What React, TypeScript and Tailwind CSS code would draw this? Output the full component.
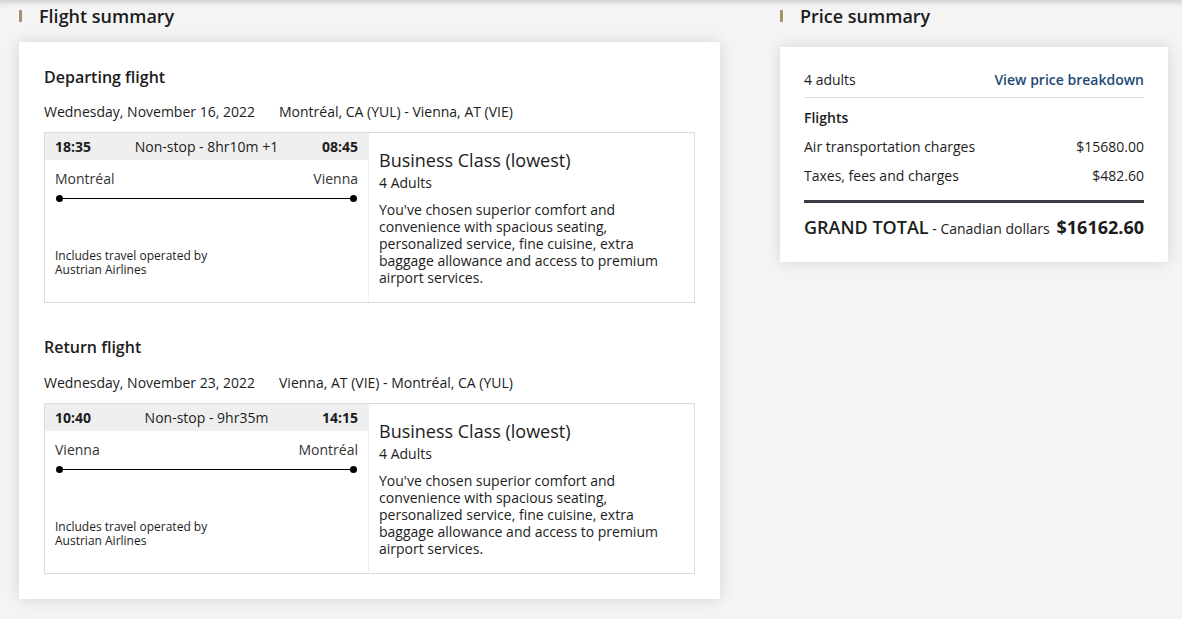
const font = { fontFamily: '"Open Sans", "Liberation Sans", sans-serif' };

type Flight = {
  title: string;
  date: string;
  route: string;
  dep: string;
  arr: string;
  duration: string;
  from: string;
  to: string;
};

const flights: Flight[] = [
  {
    title: "Departing flight",
    date: "Wednesday, November 16, 2022",
    route: "Montréal, CA (YUL) - Vienna, AT (VIE)",
    dep: "18:35",
    arr: "08:45",
    duration: "Non-stop - 8hr10m +1",
    from: "Montréal",
    to: "Vienna",
  },
  {
    title: "Return flight",
    date: "Wednesday, November 23, 2022",
    route: "Vienna, AT (VIE) - Montréal, CA (YUL)",
    dep: "10:40",
    arr: "14:15",
    duration: "Non-stop - 9hr35m",
    from: "Vienna",
    to: "Montréal",
  },
];

const SectionTitle = ({ children }: { children: React.ReactNode }) => (
  <div className="flex items-center h-6 mt-1">
    <span className="w-[3px] h-3 bg-[#a8926d] mr-[17px]" />
    <h2 className="text-[18px] leading-6 font-semibold text-[#1c1c1c]">{children}</h2>
  </div>
);

const FlightBlock = ({ f, first }: { f: Flight; first: boolean }) => (
  <section className={first ? "" : "mt-[33px]"}>
    <h3 className="text-[16px] leading-[22px] font-semibold">{f.title}</h3>
    <div className={`flex text-[14px] leading-5 ${first ? "mt-[14px]" : "mt-[15px]"}`}>
      <span className="w-[235px]">{f.date}</span>
      <span>{f.route}</span>
    </div>
    <div className="flex border border-[#dcdcdc] mt-[10px]">
      <div className="w-[324px] flex flex-col border-r border-dotted border-[#e2e2e2]">
        <div className="flex items-center justify-between h-[27px] bg-[#efefef] pl-[10px] pr-[10px] text-[14px]">
          <span className="font-bold">{f.dep}</span>
          <span>{f.duration}</span>
          <span className="font-bold">{f.arr}</span>
        </div>
        <div className="flex justify-between pl-[10px] pr-[10px] mt-[9px] text-[14px] leading-5 text-[#333]">
          <span>{f.from}</span>
          <span>{f.to}</span>
        </div>
        <div className="flex items-center mx-[11px] mt-[6px]">
          <span className="w-[7px] h-[7px] rounded-full bg-black" />
          <span className="flex-1 h-px bg-black" />
          <span className="w-[7px] h-[7px] rounded-full bg-black" />
        </div>
        <p className="text-[12px] leading-[14px] pl-[10px] mt-auto mb-[25px]">
          <span className="block">Includes travel operated by</span>
          <span className="block">Austrian Airlines</span>
        </p>
      </div>
      <div className="flex-1 pl-[10px] pr-[10px] pt-[15px] pb-[16px]">
        <div className="text-[18px] leading-6">Business Class (lowest)</div>
        <div className="text-[14px] leading-5 mt-px">4 Adults</div>
        <p className="text-[14px] leading-[17px] mt-2 w-[290px]">
          You've chosen superior comfort and convenience with spacious seating, personalized service, fine cuisine, extra
          baggage allowance and access to premium airport services.
        </p>
      </div>
    </div>
  </section>
);

export default function App() {
  return (
    <div
      style={font}
      className="min-h-[619px] bg-[#f4f4f4] text-[#1c1c1c] shadow-[inset_0_7px_6px_-5px_rgba(0,0,0,0.18)] flex gap-[60px] pl-[19px]"
    >
      <div className="w-[701px]">
        <SectionTitle>Flight summary</SectionTitle>
        <div className="mt-[14px] bg-white shadow-[0_0_14px_rgba(0,0,0,0.13)] px-[25px] pt-[24px] pb-[25px]">
          {flights.map((f, i) => (
            <FlightBlock key={f.title} f={f} first={i === 0} />
          ))}
        </div>
      </div>

      <div className="w-[388px]">
        <SectionTitle>Price summary</SectionTitle>
        <div className="mt-[19px] bg-white shadow-[0_0_14px_rgba(0,0,0,0.13)] px-6 pt-[23px] pb-[23px] text-[14px] leading-5">
          <div className="flex justify-between pb-[7px] border-b border-[#dcdcdc]">
            <span>4 adults</span>
            <a className="font-semibold text-[#1e4a78]">View price breakdown</a>
          </div>
          <div className="font-semibold mt-[10px]">Flights</div>
          <div className="flex justify-between mt-[9px]">
            <span>Air transportation charges</span>
            <span>$15680.00</span>
          </div>
          <div className="flex justify-between mt-[9px]">
            <span>Taxes, fees and charges</span>
            <span>$482.60</span>
          </div>
          <div className="h-[3px] bg-[#3a3d44] mt-[14px]" />
          <div className="flex items-baseline justify-between mt-[12px]">
            <span>
              <span className="text-[18px] leading-6 font-semibold">GRAND TOTAL</span>
              <span> - Canadian dollars</span>
            </span>
            <span className="text-[18px] leading-6 font-bold">$16162.60</span>
          </div>
        </div>
      </div>
    </div>
  );
}
